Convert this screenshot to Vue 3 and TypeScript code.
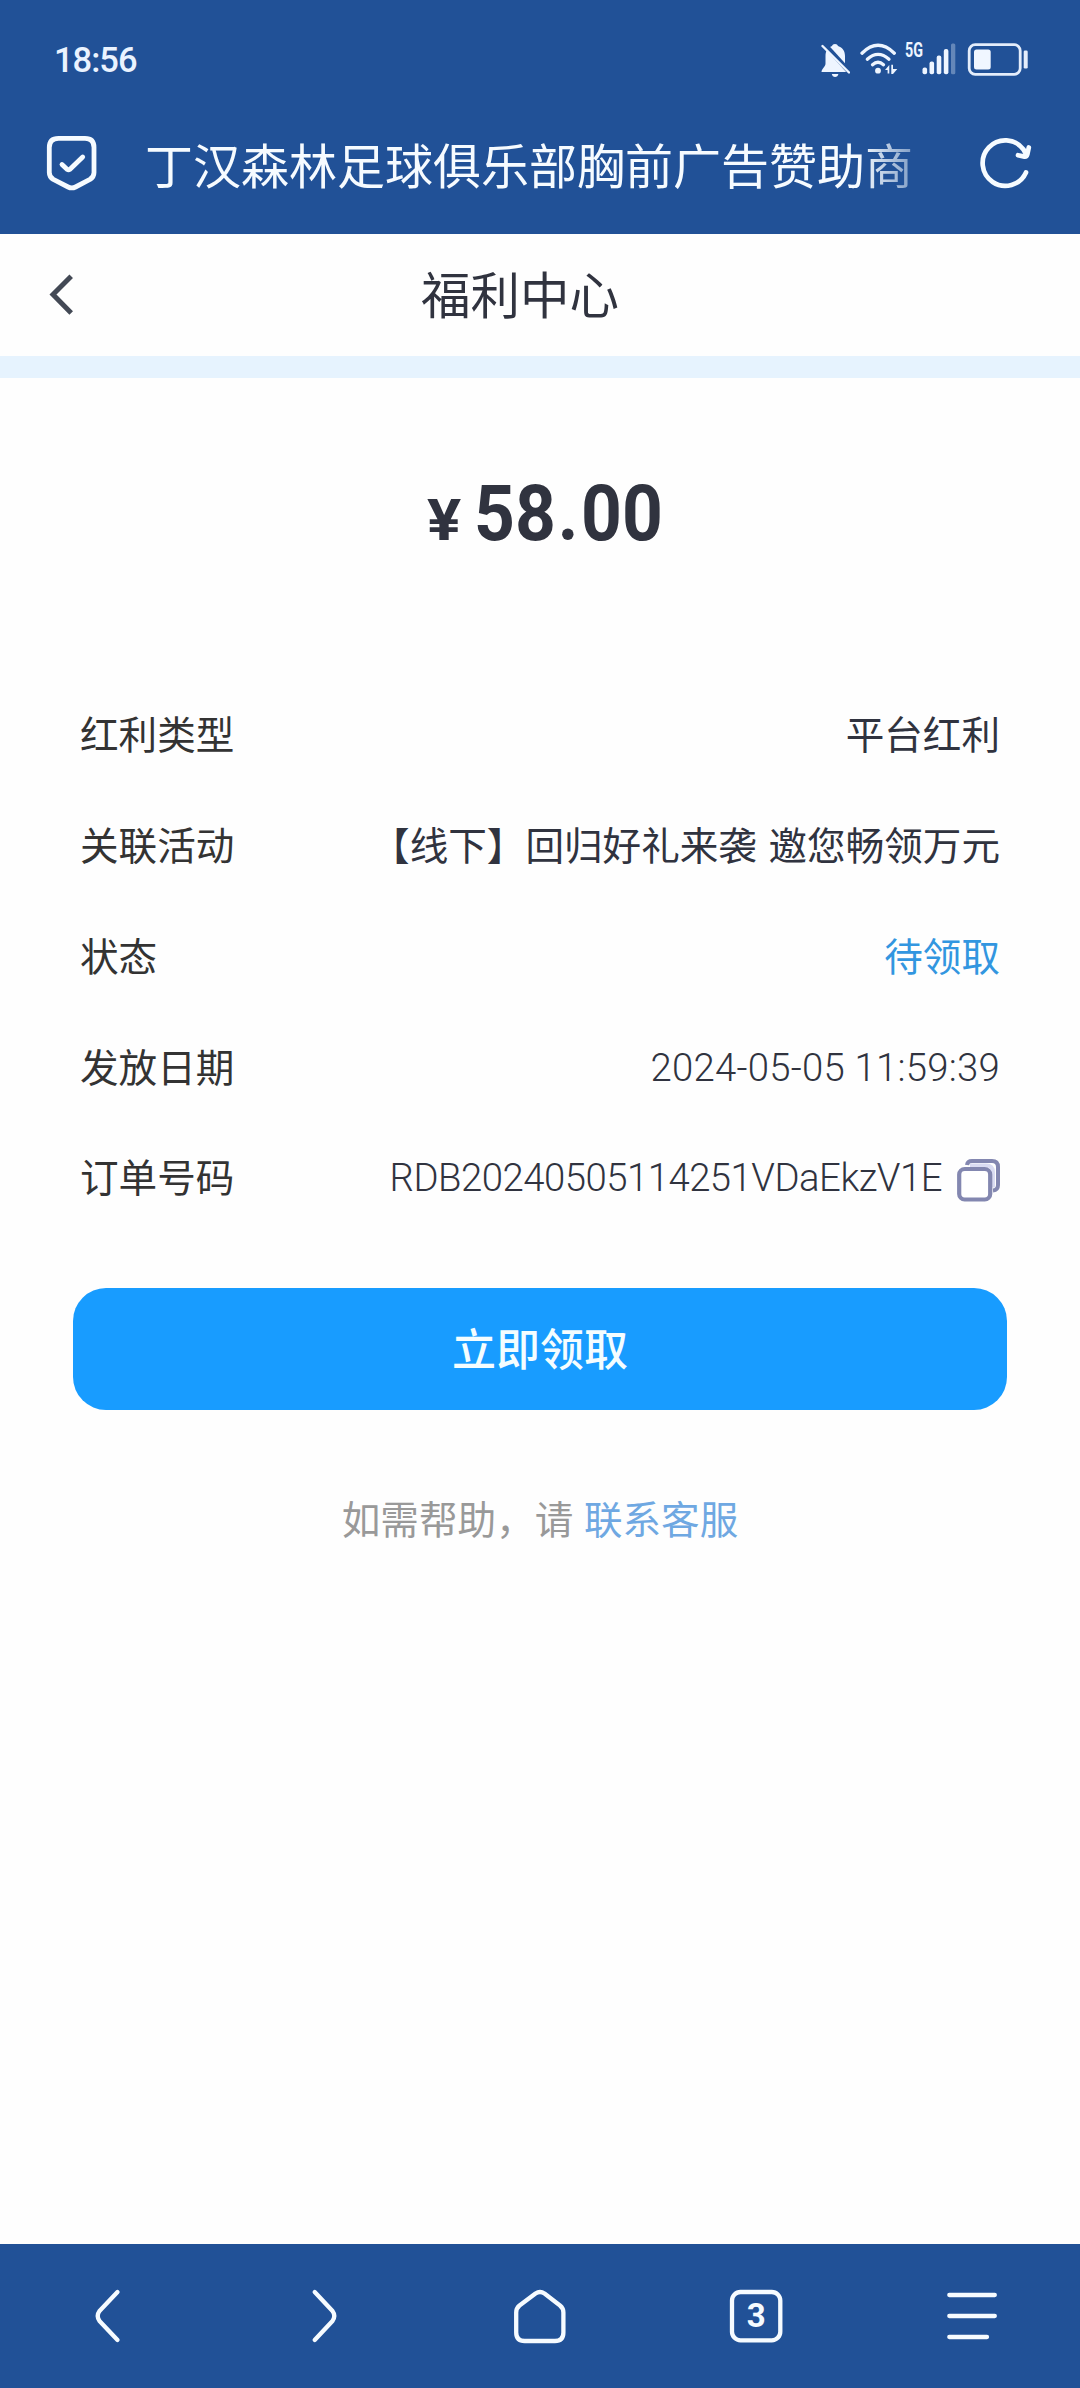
<script setup lang="ts">
interface DetailRow {
  label: string
  value: string
  kind?: 'status' | 'latin' | 'order'
}

const rows: DetailRow[] = [
  { label: '红利类型', value: '平台红利' },
  { label: '关联活动', value: '【线下】回归好礼来袭 邀您畅领万元' },
  { label: '状态', value: '待领取', kind: 'status' },
  { label: '发放日期', value: '2024-05-05 11:59:39', kind: 'latin' },
  { label: '订单号码', value: 'RDB20240505114251VDaEkzV1E', kind: 'order' },
]
</script>

<template>
  <div class="screen">
    <header class="browser">
      <div class="status-bar">
        <span class="clock">18:56</span>
        <div class="indicators">
          <svg class="bell" width="30" height="36" viewBox="820 42 30 36">
            <path d="M835 44c1.600 0 2.600.8 3 2 4.600 1.400 7 5 7 10v7.500c0 3.500 4 5 4 8.500H821.500c0-3.500 4-5 4-8.500V56c0-5 2.400-8.600 6.500-10 .4-1.200 1.400-2 3-2z" fill="#eef5ff" />
            <path d="M831.800 74h6.600c-.4 2-1.600 3-3.300 3s-2.900-1-3.300-3z" fill="#eef5ff" />
            <path d="M824.500 44.500 851 73.500" stroke="#215197" stroke-width="5" />
            <path d="M822.500 46 849 72.500" stroke="#eef5ff" stroke-width="2.400" stroke-linecap="round" />
          </svg>
          <svg class="wifi" width="38" height="36" viewBox="860 42 38 36">
            <g fill="none" stroke="#eef5ff" stroke-width="3.300" stroke-linecap="round">
              <path d="M862 53.200Q878 37.500 894.300 53.200" />
              <path d="M867.300 59.200Q878 49.500 889 59.200" />
              <path d="M872.500 64.700Q878 59.800 883.500 64.700" />
            </g>
            <circle cx="878" cy="70.700" r="2.900" fill="#eef5ff" />
            <path d="M885 70l4.300-5v8.600h-1.700V70zM891.300 64.700h1.700V69h4.300l-4.300 5h-1.700z" fill="#eef5ff" />
          </svg>
          <svg class="signal" width="52" height="48" viewBox="904 30 52 48">
            <text x="905" y="57" class="net" textLength="18" lengthAdjust="spacingAndGlyphs">5G</text>
            <g fill="#eef5ff">
              <rect x="922.500" y="67.500" width="4.600" height="6.800" rx="2" />
              <rect x="929.500" y="61.500" width="4.600" height="12.800" rx="2" />
              <rect x="936.700" y="55.500" width="4.600" height="18.800" rx="2" />
              <rect x="943.800" y="49" width="4.600" height="25.300" rx="2" />
              <rect x="951" y="43.500" width="4.300" height="30.800" rx="1.500" opacity=".33" />
            </g>
          </svg>
          <svg class="battery" width="62" height="36" viewBox="967 42 62 36">
            <rect x="969.200" y="44.700" width="51" height="29.600" rx="6" fill="none" stroke="#e4edfb" stroke-width="2.800" />
            <rect x="974" y="49.500" width="16.700" height="20" rx="2.500" fill="#f0f6ff" />
            <rect x="1023.700" y="50.500" width="4" height="18" rx="1.300" fill="#e4edfb" />
          </svg>
        </div>
      </div>
      <div class="address">
        <svg class="shield" width="54" height="58" viewBox="45 134 54 58" fill="none" stroke="#f6fbff" stroke-width="4.800" stroke-linecap="round" stroke-linejoin="round">
          <path d="M58.500 138.400H85q9 0 9 9v25q0 4.500-4 7L75.500 187q-3.700 1.900-7.400 0L53.300 179.400q-4-2.500-4-7v-25q0-9 9.200-9z" />
          <path d="M62 164.500 67 169.300q1.500 1 3 0L82.700 157" />
        </svg>
        <div class="page-name">丁汉森林足球俱乐部胸前广告赞助商</div>
        <svg class="reload" width="56" height="56" viewBox="978 134 56 56" fill="none" stroke="#f6fbff" stroke-width="4.700" stroke-linecap="round" stroke-linejoin="round">
          <path d="M1026 171.500A22.700 22.700 0 1 1 1023.500 148.500L1026 153" />
          <path d="M1028.800 146.500 1027.300 153.500q-.6 2.300-2.800 2.100L1018 154.200" />
        </svg>
      </div>
    </header>

    <div class="title-bar">
      <svg class="back" width="26" height="44" viewBox="48 274 26 44" fill="none" stroke="#434955" stroke-width="5">
        <path d="M71.200 277.200 53 295.500 71.200 314" />
      </svg>
      <h1>福利中心</h1>
    </div>
    <div class="band"></div>

    <main>
      <div class="amount"><span class="yen">¥</span><span class="sum">58<i>.</i>00</span></div>
      <dl>
        <div v-for="row in rows" :key="row.label" class="row">
          <dt>{{ row.label }}</dt>
          <dd :class="row.kind">
            <span>{{ row.value }}</span>
            <svg v-if="row.kind === 'order'" class="copy" width="43" height="43" viewBox="0 0 43 43" fill="none">
              <path d="M10 6q.5-4 5-4h20q6 0 6 6v18q0 5-5 5.500" stroke="#8387b0" stroke-width="4" />
              <path d="M13 6.500h16q7 0 7 7v15" stroke="#dadcf2" stroke-width="4" />
              <rect x="2.200" y="10" width="31" height="30.500" rx="5.500" fill="#fff" stroke="#8387b0" stroke-width="4.200" />
            </svg>
          </dd>
        </div>
      </dl>
      <button type="button">立即领取</button>
      <p class="help">如需帮助，请 <a>联系客服</a></p>
    </main>

    <nav>
      <span>
        <svg width="60" height="60" viewBox="78 2286 60 60"><path d="M117.500 2292 99.500 2311q-3.600 5 0 10L117.500 2340" /></svg>
      </span>
      <span>
        <svg width="60" height="60" viewBox="294 2286 60 60"><path d="M314.700 2292 332.500 2311q3.600 5 0 10L314.700 2340" /></svg>
      </span>
      <span>
        <svg width="60" height="60" viewBox="510 2286 60 60"><path d="M519.500 2305.500 535.500 2293.500q4.500-3 9 0L560 2305.500q3.400 2.800 3.400 7v20q0 8.500-8.500 8.500H524.700q-8.500 0-8.500-8.500v-20q0-4.200 3.300-7z" /></svg>
      </span>
      <span>
        <svg width="60" height="60" viewBox="726 2286 60 60">
          <rect x="732" y="2292" width="48.300" height="48.300" rx="8.500" />
          <text x="756.200" y="2327.300" text-anchor="middle" class="tabs">3</text>
        </svg>
      </span>
      <span>
        <svg width="60" height="60" viewBox="942 2286 60 60"><path d="M949.300 2295H994.800M949.300 2316H994.800M949.300 2337H987" /></svg>
      </span>
    </nav>
  </div>
</template>

<style>
body {
  margin: 0;
  background: #fefefe;
}
</style>

<style scoped>
.screen {
  width: 1080px;
  height: 2388px;
  display: flex;
  flex-direction: column;
  background: #fefefe;
  color: #30333f;
  font-family: "Noto Sans CJK SC", sans-serif;
}
svg {
  display: block;
  flex: none;
}
.browser {
  height: 234px;
  background: #215197;
  color: #f6fbff;
}
.status-bar {
  height: 120px;
  display: flex;
  justify-content: space-between;
  padding: 0 51px 0 54px;
}
.clock {
  font: 500 34.500px/120px Roboto, sans-serif;
  letter-spacing: -1px;
  color: #eaf3ff;
}
.indicators {
  display: flex;
  align-items: flex-end;
  height: 78px;
}
.wifi {
  margin-left: 10px;
}
.signal {
  margin-left: 6px;
}
.battery {
  margin-left: 11px;
}
.net {
  font: 700 19.500px Roboto, sans-serif;
  fill: #eef5ff;
}
.address {
  height: 86px;
  display: flex;
  align-items: center;
  padding: 0 46px 0 45px;
}
.page-name {
  width: 768px;
  margin-left: 46px;
  font-size: 48px;
  font-weight: 400;
  line-height: 72px;
  white-space: nowrap;
  mask-image: linear-gradient(90deg, #000 715px, rgba(0, 0, 0, .45) 768px);
}
.reload {
  margin-left: auto;
}
.title-bar {
  height: 122px;
  display: flex;
  align-items: center;
  padding-left: 48px;
}
h1 {
  margin: 0 0 5px 347px;
  font-size: 49.500px;
  font-weight: 400;
  line-height: 72px;
}
.band {
  height: 22px;
  background: #e6f3fe;
}
main {
  flex: 1;
}
.amount {
  height: 90px;
  margin-top: 91px;
  padding-left: 427px;
  display: flex;
  align-items: baseline;
  font: 700 77.500px/90px Roboto, sans-serif;
}
.yen {
  width: 47px;
  font-size: 57px;
  transform: scaleX(1.12);
  transform-origin: left;
}
.sum {
  transform: scaleX(.92);
  transform-origin: left;
  letter-spacing: 0;
}
.sum i {
  font-style: normal;
  letter-spacing: 3px;
  margin-left: 2px;
}
dl {
  margin: 118px 80px 0;
}
.row {
  height: 110.750px;
  display: flex;
  align-items: center;
  justify-content: space-between;
  font-size: 38.600px;
  line-height: 56px;
  word-spacing: 3px;
}
dt {
  color: #333;
}
dd {
  margin: 0;
  display: flex;
  align-items: center;
}
.status {
  color: #3296e0;
}
.latin,
.order {
  padding-top: 6px;
  font-family: Roboto, sans-serif;
  font-weight: 350;
  font-size: 38.300px;
  word-spacing: 0;
}
.latin {
  letter-spacing: .25px;
}
.order {
  letter-spacing: -.5px;
}
.copy {
  margin: 4px 0 0 15px;
}
button {
  display: block;
  width: 934px;
  height: 122px;
  margin: 57px auto 0;
  padding: 0 0 3px;
  border: 0;
  border-radius: 33px;
  background: #189cff;
  color: #f4fdff;
  font: 500 44px/64px "Noto Sans CJK SC", sans-serif;
}
.help {
  margin: 79px 0 0;
  text-align: center;
  color: #999;
  font-size: 38.600px;
  line-height: 56px;
  word-spacing: 2px;
}
.help a {
  color: #6fa8e2;
}
nav {
  height: 144px;
  display: grid;
  grid-template-columns: repeat(5, 1fr);
  place-items: center;
  background: #215197;
  fill: none;
  stroke: #f6fbff;
  stroke-width: 4.300px;
  stroke-linecap: round;
  stroke-linejoin: round;
}
.tabs {
  font: 700 33px Roboto, sans-serif;
  fill: #f6fbff;
  stroke: none;
}
</style>
